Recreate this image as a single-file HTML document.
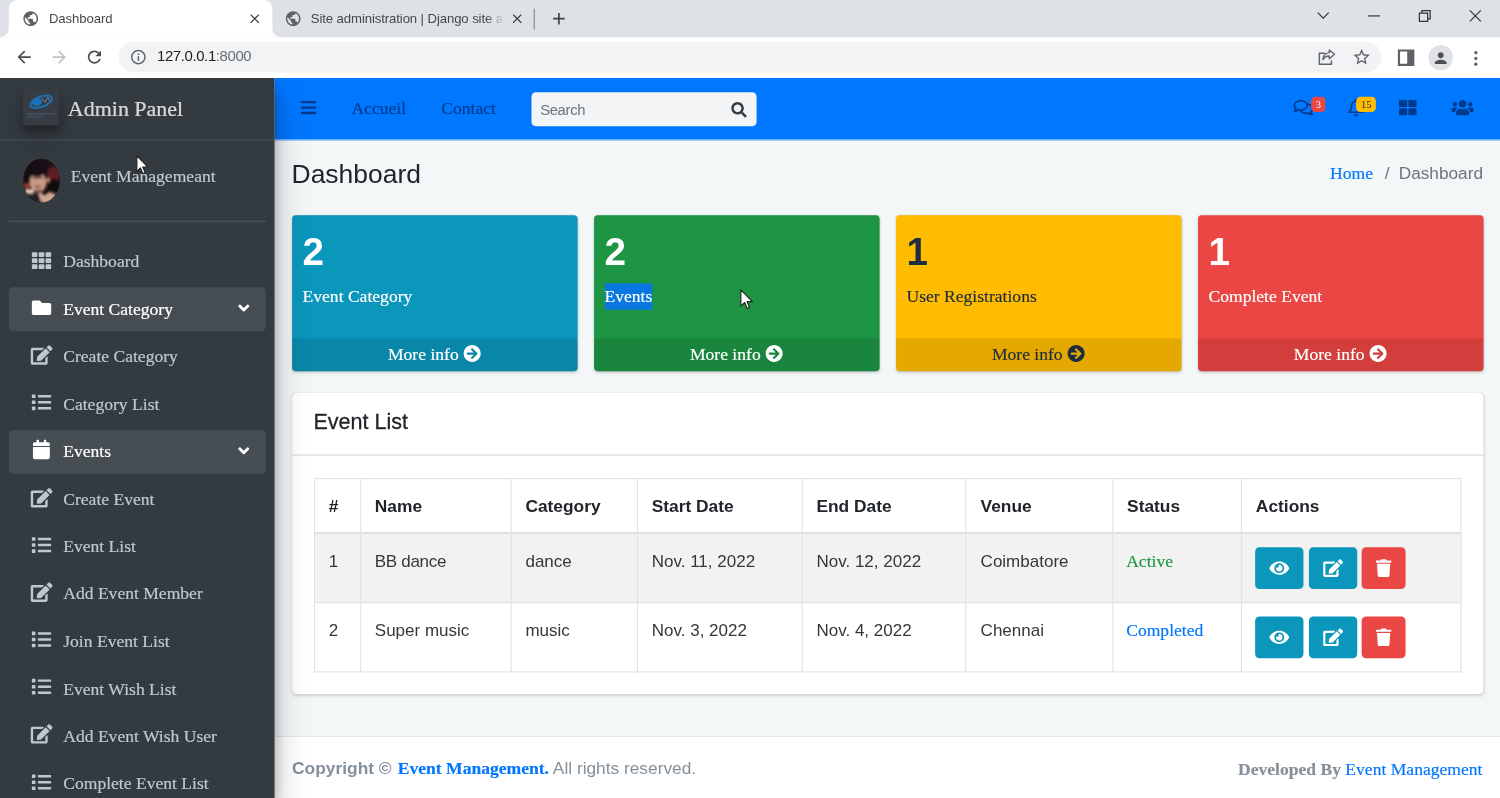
<!DOCTYPE html>
<html lang="en">
<head>
<meta charset="utf-8">
<title>Dashboard</title>
<style>
html,body{margin:0;padding:0;width:1500px;height:798px;overflow:hidden;background:#ffffff}
*{box-sizing:border-box}
#w{position:absolute;left:0;top:0;width:1366px;height:727px;transform:scale(1.098097);transform-origin:0 0;overflow:hidden;font-family:"Liberation Sans",sans-serif;font-size:16px;line-height:1.5;color:#212529;background:#f4f6f9}
svg{display:inline-block;overflow:visible}
p{margin:0}
a{text-decoration:none;color:inherit}
.serif{font-family:"Liberation Serif",serif}
.abs{position:absolute}

/* ---------- browser chrome ---------- */
#tabs{position:absolute;left:0;top:0;width:1366px;height:34px;background:#dee1e6}
#tab1{position:absolute;left:8px;top:0;width:240px;height:34px;background:#ffffff;border-radius:8px 8px 0 0}
#tab1:before,#tab1:after{content:"";position:absolute;bottom:0;width:8px;height:8px}
#tab1:before{left:-8px;background:radial-gradient(circle at 0 0,rgba(255,255,255,0) 7.6px,#ffffff 8.2px)}
#tab1:after{right:-8px;background:radial-gradient(circle at 100% 0,rgba(255,255,255,0) 7.6px,#ffffff 8.2px)}
.ttl{position:absolute;top:9px;font-size:12px;line-height:16px;color:#45494d;white-space:nowrap;letter-spacing:-.1px}
.ci{position:absolute;line-height:0}
#toolbar{position:absolute;left:0;top:34px;width:1366px;height:37px;background:#ffffff}
#omni{position:absolute;left:108.4px;top:4.3px;width:1149.2px;height:28px;border-radius:14px;background:#f1f3f4}
#url{position:absolute;left:34.6px;top:5px;font-size:13.6px;line-height:18px;color:#202124;white-space:nowrap;letter-spacing:-.35px}
#url span{color:#6a6e73}

/* ---------- sidebar ---------- */
#page{position:absolute;left:0;top:71px;width:1366px;height:656px;overflow:hidden;background:rgb(244,247,248)}
#side{position:absolute;left:0;top:0;width:250px;height:656px;background:#333a40;z-index:5;box-shadow:0 14px 28px rgba(0,0,0,.25),0 10px 10px rgba(0,0,0,.22);font-family:"Liberation Serif",serif;color:#c1c7d0;-webkit-text-stroke:.18px}
#brand{height:57px;border-bottom:1px solid #4a545c;padding:13px 8px;font-size:20px;line-height:30px;color:rgba(255,255,255,.8);white-space:nowrap}
#logo{float:left;margin-left:12.8px;margin-right:8px;margin-top:-3px;width:33px;height:33px;box-shadow:0 10px 20px rgba(0,0,0,.19),0 6px 6px rgba(0,0,0,.23);line-height:0}
#sb{padding:0 8px}
#user{margin-top:16px;padding-bottom:16px;margin-bottom:16px;border-bottom:1px solid #4e5963;display:flex;height:58px}
#user .image{padding-left:12.8px;line-height:0}
#user .info{padding:5px 5px 5px 10px;line-height:24px;white-space:nowrap}
.nl{display:block;position:relative;height:40px;padding:8px 16px;margin-bottom:3.2px;border-radius:4px;white-space:nowrap;color:#c1c7d0}
.nl.act{background:rgba(255,255,255,.1);color:#ffffff}
.nl .r{position:absolute;right:15px;top:11.2px;line-height:0}

/* ---------- navbar ---------- */
#nav{position:absolute;left:250px;top:0;width:1116px;height:57px;background:#0077ff;border-bottom:1px solid #cde2f8;color:rgb(0,58,138)}
#nav .it{position:absolute;top:16px;line-height:24px;white-space:nowrap;font-family:"Liberation Serif",serif}
#nav .ic{position:absolute;line-height:0}
#search{position:absolute;left:233.6px;top:12.5px;width:205.4px;height:31px;border-radius:4px;background:#f2f4f6}
#search span{position:absolute;left:8.3px;top:6px;font-size:13.5px;line-height:21px;color:#6b757d;letter-spacing:-.3px}
#search .ic{right:8.6px;top:9.6px}
.bdg{position:absolute;top:17px;height:13.6px;font-size:9.6px;line-height:13.6px;padding:0 4px;border-radius:4px;font-family:"Liberation Serif",serif;text-align:center}

/* ---------- content ---------- */
#main{position:absolute;left:250px;top:57px;width:1116px;height:599px}
#h1{position:absolute;left:15.5px;top:17px;font-size:24.1px;line-height:28.8px;color:#212529;white-space:nowrap}
#bc{position:absolute;right:15.5px;top:17.7px;line-height:24px;white-space:nowrap;color:#6b757d;font-size:15.7px}
#bc a{font-family:"Liberation Serif",serif;color:#0077ff;font-size:16px}
#bc i{font-style:normal;padding:0 8.4px 0 10.7px}
.sbx{position:absolute;top:67.8px;width:260px;height:142.2px;border-radius:3.5px;box-shadow:0 0 1px rgba(0,0,0,.1),0 1px 3px rgba(0,0,0,.14);color:#ffffff;overflow:hidden}
.sbx h3{margin:0;position:absolute;left:10px;top:12.4px;font-size:35.2px;line-height:42.24px;font-weight:bold;white-space:nowrap}
.sbx p{position:absolute;left:10px;top:62.24px;line-height:24px;font-family:"Liberation Serif",serif;white-space:nowrap}
.sbx .ft{position:absolute;left:0;right:0;bottom:0;height:30px;padding:3px 0;background:rgba(0,0,0,.1);text-align:center;line-height:24px;font-family:"Liberation Serif",serif;color:#ffffff;white-space:nowrap}
.sbx .ft svg{vertical-align:-2px}
.sel{background:rgb(8,120,224);color:#ffffff;display:inline-block;line-height:24px;height:24px;vertical-align:top}
#card{position:absolute;left:15.5px;top:230px;width:1085px;height:274px;background:#ffffff;border-radius:4px;box-shadow:0 0 1px rgba(0,0,0,.1),0 1px 3px rgba(0,0,0,.15)}
#ch{height:57px;border-bottom:1px solid rgba(0,0,0,.125);padding:12px 20px}
#ch span{display:block;font-size:19.6px;line-height:24px;white-space:nowrap;position:relative;top:1.8px;-webkit-text-stroke:.25px #212529}
table{position:absolute;left:20px;top:77px;transform:translateY(.4px);width:1045px;border-collapse:collapse;table-layout:fixed}
th,td{border:1px solid #dee2e6;padding:12px;text-align:left;vertical-align:top;font-size:15.5px;line-height:24px;white-space:nowrap}
th{font-weight:bold;border-bottom-width:2px;font-size:15.8px}
th span,td span.t{position:relative;top:1px;left:.8px}
td span.t{color:#34383c}
tr.odd td{background:rgba(0,0,0,.05)}
td .st{font-family:"Liberation Serif",serif;font-size:16px;position:relative;top:1.3px}
.btn{display:inline-block;height:38px;border-radius:4px;vertical-align:top;text-align:center;line-height:0;padding-top:11px;color:#ffffff}
.bi{background:#0b96bb;width:44px}
.bd{background:#ea4643;width:40px}
#foot{position:absolute;left:0;bottom:0;width:1116px;height:57px;background:#ffffff;border-top:1px solid #dee2e6;padding:16px;color:#85909a;line-height:24px;white-space:nowrap}
#foot .l{position:absolute;left:16px;top:17px;font-size:15.75px}
#foot .l>b{font-size:15.8px;margin-right:1.2px}
#foot .rr{position:absolute;right:16px;top:17.9px;font-family:"Liberation Serif",serif}
#foot a{color:#0077ff;font-family:"Liberation Serif",serif;font-size:16px}
.cur{position:absolute;z-index:50;line-height:0}
svg.fa{vertical-align:-2px}

#navl{transform:translateY(.55px)}
.sbx p,.sbx .ft,#nav .it,td .st,#bc a,#foot a,#foot .rr{-webkit-text-stroke:.15px}

</style>
</head>
<body>
<div id="w">

<!-- ======== browser chrome ======== -->
<div id="tabs">
  <div id="tab1">
    <span class="ci" style="left:12px;top:9px"><svg viewBox="0 0 24 24" width="16.0" height="16.0" style="" aria-hidden="true"><path fill="#5f6368" d="M12 2C6.48 2 2 6.48 2 12s4.48 10 10 10 10-4.48 10-10S17.52 2 12 2zm-1 17.93c-3.95-.49-7-3.85-7-7.93 0-.62.08-1.21.21-1.79L9 15v1c0 1.1.9 2 2 2v1.930zm6.900-2.540c-.260-.810-1-1.390-1.900-1.390h-1v-3c0-.550-.450-1-1-1H8v-2h2c.550 0 1-.450 1-1V7h2c1.100 0 2-.900 2-2v-.410c2.930 1.190 5 4.060 5 7.410 0 2.080-.800 3.970-2.100 5.390z"/></svg></span>
    <span class="ttl" style="left:36.6px">Dashboard</span>
    <span class="ci" style="left:217px;top:10px"><svg viewBox="0 0 24 24" width="14.0" height="14.0" style="" aria-hidden="true"><path fill="#3c4043" d="M19 6.410L17.590 5 12 10.590 6.410 5 5 6.410 10.590 12 5 17.590 6.410 19 12 13.410 17.590 19 19 17.590 13.410 12z"/></svg></span>
  </div>
  <span class="ci" style="left:258.5px;top:9px"><svg viewBox="0 0 24 24" width="16.0" height="16.0" style="" aria-hidden="true"><path fill="#5f6368" d="M12 2C6.48 2 2 6.48 2 12s4.48 10 10 10 10-4.48 10-10S17.52 2 12 2zm-1 17.93c-3.95-.49-7-3.85-7-7.93 0-.62.08-1.21.21-1.79L9 15v1c0 1.1.9 2 2 2v1.930zm6.900-2.540c-.260-.810-1-1.390-1.900-1.390h-1v-3c0-.550-.450-1-1-1H8v-2h2c.550 0 1-.450 1-1V7h2c1.100 0 2-.900 2-2v-.410c2.930 1.190 5 4.060 5 7.410 0 2.080-.800 3.970-2.100 5.390z"/></svg></span>
  <span class="ttl" style="left:283px;width:178px;overflow:hidden;-webkit-mask-image:linear-gradient(90deg,#000000 160px,transparent 176px);mask-image:linear-gradient(90deg,#000000 160px,transparent 176px)">Site administration | Django site admin</span>
  <span class="ci" style="left:464px;top:10px"><svg viewBox="0 0 24 24" width="14.0" height="14.0" style="" aria-hidden="true"><path fill="#3c4043" d="M19 6.410L17.590 5 12 10.590 6.410 5 5 6.410 10.590 12 5 17.590 6.410 19 12 13.410 17.590 19 19 17.590 13.410 12z"/></svg></span>
  <span class="abs" style="left:486px;top:8px;width:1px;height:19px;background:#7f868b"></span>
  <span class="ci" style="left:499.5px;top:8px"><svg viewBox="0 0 24 24" width="18.0" height="18.0" style="" aria-hidden="true"><path fill="#3c4043" d="M19 13h-6v6h-2v-6H5v-2h6V5h2v6h6v2z"/></svg></span>
  <span class="ci" style="left:1199px;top:9px"><svg width="12" height="10" viewBox="0 0 12 10"><path d="M1 2.5l5 5 5-5" fill="none" stroke="#333333" stroke-width="1.1"/></svg></span>
  <span class="ci" style="left:1245.5px;top:9px"><svg width="11" height="10" viewBox="0 0 11 10"><path d="M0 5.5h10.5" fill="none" stroke="#333333" stroke-width="1.1"/></svg></span>
  <span class="ci" style="left:1291.5px;top:9px"><svg width="11" height="11" viewBox="0 0 11 11"><path d="M.6 2.9h7.5v7.5H.6z M2.9 2.9V.6h7.5v7.5H8.1" fill="none" stroke="#333333" stroke-width="1.1"/></svg></span>
  <span class="ci" style="left:1338px;top:9px"><svg width="11" height="11" viewBox="0 0 11 11"><path d="M.5.5l10 10M10.500.5l-10 10" fill="none" stroke="#333333" stroke-width="1.1"/></svg></span>
</div>
<div id="toolbar">
  <span class="ci" style="left:12.9px;top:9px"><svg viewBox="0 0 24 24" width="18.0" height="18.0" style="" aria-hidden="true"><path fill="#4a4d51" d="M20 11H7.83l5.590-5.590L12 4l-8 8 8 8 1.410-1.410L7.830 13H20v-2z"/></svg></span>
  <span class="ci" style="left:45.2px;top:9px"><svg viewBox="0 0 24 24" width="18.0" height="18.0" style="" aria-hidden="true"><path fill="#bdc1c6" d="M12 4l-1.410 1.410L16.170 11H4v2h12.170l-5.580 5.590L12 20l8-8z"/></svg></span>
  <span class="ci" style="left:77px;top:9px"><svg viewBox="0 0 24 24" width="18.0" height="18.0" style="" aria-hidden="true"><path fill="#4a4d51" d="M17.650 6.350C16.200 4.900 14.210 4 12 4c-4.420 0-7.990 3.580-7.990 8s3.570 8 7.990 8c3.730 0 6.840-2.550 7.730-6h-2.080c-.820 2.330-3.040 4-5.650 4-3.310 0-6-2.690-6-6s2.690-6 6-6c1.660 0 3.140.690 4.220 1.780L13 11h7V4l-2.350 2.350z"/></svg></span>
  <div id="omni">
    <span class="ci" style="left:10px;top:6px"><svg viewBox="0 0 24 24" width="16.0" height="16.0" style="" aria-hidden="true"><path fill="#5f6368" d="M11 7h2v2h-2zm0 4h2v6h-2zm1-9C6.480 2 2 6.480 2 12s4.480 10 10 10 10-4.480 10-10S17.520 2 12 2zm0 18c-4.410 0-8-3.590-8-8s3.590-8 8-8 8 3.590 8 8-3.590 8-8 8z"/></svg></span>
    <span id="url">127.0.0.1<span>:8000</span></span>
  </div>
  <span class="ci" style="left:1200px;top:10px"><svg width="17" height="16" viewBox="0 0 17 16"><path d="M6.500 4.500H1.500V14.500H12.500V11" fill="none" stroke="#5f6368" stroke-width="1.300"/><path d="M10.500 1.500L15.300 5.500L10.500 9.500V7C7.500 7 5.800 8.200 4.800 10.500C5 7 6.800 4.300 10.500 4Z" fill="none" stroke="#5f6368" stroke-width="1.200" stroke-linejoin="round"/></svg></span>
  <span class="ci" style="left:1230.5px;top:9px"><svg viewBox="0 0 24 24" width="18.0" height="18.0" style="" aria-hidden="true"><path fill="#5f6368" d="M22 9.240l-7.190-.620L12 2 9.190 8.630 2 9.240l5.460 4.730L5.820 21 12 17.270 18.180 21l-1.630-7.030L22 9.240zM12 15.400l-3.760 2.270 1-4.280-3.320-2.880 4.380-.380L12 6.100l1.710 4.040 4.380.380-3.320 2.880 1 4.280L12 15.400z"/></svg></span>
  <span class="ci" style="left:1273px;top:11px"><svg width="15" height="15" viewBox="0 0 15 15"><path d="M1 1h13v13H1z" fill="none" stroke="#5f6368" stroke-width="2"/><path d="M8.500 1h5.500v13H8.500z" fill="#5f6368"/></svg></span>
  <span class="abs" style="left:1300.500px;top:7.300px;width:22.500px;height:22.500px;border-radius:50%;background:#dfe1e5"></span>
  <span class="ci" style="left:1303.800px;top:10.500px"><svg viewBox="0 0 24 24" width="16.0" height="16.0" style="" aria-hidden="true"><path fill="#494f55" d="M12 12c2.210 0 4-1.790 4-4s-1.790-4-4-4-4 1.790-4 4 1.790 4 4 4zm0 2c-2.670 0-8 1.340-8 4v2h16v-2c0-2.660-5.330-4-8-4z"/></svg></span>
  <span class="ci" style="left:1342.200px;top:11.500px"><svg width="4" height="15" viewBox="0 0 4 15"><circle cx="2" cy="2" r="1.500" fill="#5f6368"/><circle cx="2" cy="7.200" r="1.500" fill="#5f6368"/><circle cx="2" cy="12.400" r="1.500" fill="#5f6368"/></svg></span>
</div>

<div id="page">
<!-- ======== sidebar ======== -->
<div id="side">
  <div id="brand">
    <span id="logo"><svg width="33" height="33" viewBox="0 0 33 33"><defs><filter id="blg" x="-20%" y="-20%" width="140%" height="140%"><feGaussianBlur stdDeviation=".7"/></filter></defs><rect width="33" height="33" fill="rgb(54,60,66)"/><g filter="url(#blg)"><ellipse cx="16.500" cy="11.700" rx="10.300" ry="4.600" fill="none" stroke="rgb(28,108,170)" stroke-width="2" transform="rotate(-20 16.500 11.700)"/><ellipse cx="12.500" cy="11.800" rx="4.800" ry="3.700" fill="rgb(26,112,180)"/><path d="M17 8.500l3 3.500 2.500-4.500 1.500 3" stroke="rgb(100,140,170)" stroke-width=".9" fill="none"/><rect x="3.500" y="22.200" width="26" height="1.200" fill="rgb(66,86,106)"/><rect x="3.500" y="25" width="15" height="1.100" fill="rgb(62,80,98)"/></g></svg></span><span>Admin Panel</span>
  </div>
  <div id="sb">
    <div id="user">
      <div class="image"><svg width="33.600" height="41" viewBox="0 0 34 41"><defs><clipPath id="av"><ellipse cx="17" cy="20.500" rx="16.800" ry="20.300"/></clipPath><filter id="bl" x="-20%" y="-20%" width="140%" height="140%"><feGaussianBlur stdDeviation="1.100"/></filter></defs><g clip-path="url(#av)"><rect width="34" height="41" fill="rgb(30,16,20)"/><g filter="url(#bl)"><ellipse cx="28" cy="15" rx="6" ry="8" fill="rgb(92,30,36)"/><ellipse cx="28.500" cy="25" rx="5" ry="6" fill="rgb(14,8,10)"/><ellipse cx="3.500" cy="24.500" rx="2.600" ry="3.500" fill="rgb(170,62,44)"/><ellipse cx="13.800" cy="22" rx="7.800" ry="9.600" fill="rgb(200,154,132)"/><ellipse cx="23" cy="20" rx="1.500" ry="2.500" fill="rgb(190,140,120)"/><ellipse cx="12" cy="9.800" rx="10.500" ry="6.800" fill="rgb(22,16,18)"/><ellipse cx="3.500" cy="16" rx="3" ry="8" fill="rgb(20,14,16)"/><ellipse cx="9" cy="38" rx="7" ry="5" fill="rgb(34,34,38)"/><ellipse cx="30" cy="38" rx="6" ry="5" fill="rgb(40,40,46)"/><path d="M13 30L17 41H27L30 33L24 31L20 34Z" fill="rgb(204,164,144)"/><ellipse cx="6" cy="30.500" rx="5.200" ry="2.200" fill="rgb(226,196,180)"/><ellipse cx="13.500" cy="17.500" rx="5.500" ry="1.300" fill="rgb(110,76,66)"/><ellipse cx="13.500" cy="26" rx="3.200" ry="1.200" fill="rgb(150,96,86)"/><ellipse cx="14" cy="30.500" rx="5" ry="1.800" fill="rgb(120,84,72)"/></g></g></svg></div>
      <div class="info">Event Managemeant</div>
    </div>
    <div id="navl">
    <a class="nl"><svg class="fa " viewBox="0 0 512 512" width="17.600" height="17.6" style="margin-left:4.80px;margin-right:7.20px;vertical-align:-2.2px" aria-hidden="true"><path fill="currentColor" d="M149.333 56v80c0 13.255-10.745 24-24 24H24c-13.255 0-24-10.745-24-24V56c0-13.255 10.745-24 24-24h101.333c13.255 0 24 10.745 24 24zm181.334 240v-80c0-13.255-10.745-24-24-24H205.333c-13.255 0-24 10.745-24 24v80c0 13.255 10.745 24 24 24h101.333c13.256 0 24.001-10.745 24.001-24zm32-240v80c0 13.255 10.745 24 24 24H488c13.255 0 24-10.745 24-24V56c0-13.255-10.745-24-24-24H386.667c-13.255 0-24 10.745-24 24zm-32 80V56c0-13.255-10.745-24-24-24H205.333c-13.255 0-24 10.745-24 24v80c0 13.255 10.745 24 24 24h101.333c13.256 0 24.001-10.745 24.001-24zm-205.334 56H24c-13.255 0-24 10.745-24 24v80c0 13.255 10.745 24 24 24h101.333c13.255 0 24-10.745 24-24v-80c0-13.255-10.745-24-24-24zM0 376v80c0 13.255 10.745 24 24 24h101.333c13.255 0 24-10.745 24-24v-80c0-13.255-10.745-24-24-24H24c-13.255 0-24 10.745-24 24zm386.667-56H488c13.255 0 24-10.745 24-24v-80c0-13.255-10.745-24-24-24H386.667c-13.255 0-24 10.745-24 24v80c0 13.255 10.745 24 24 24zm0 160H488c13.255 0 24-10.745 24-24v-80c0-13.255-10.745-24-24-24H386.667c-13.255 0-24 10.745-24 24v80c0 13.255 10.745 24 24 24zM181.333 376v80c0 13.255 10.745 24 24 24h101.333c13.255 0 24-10.745 24-24v-80c0-13.255-10.745-24-24-24H205.333c-13.255 0-24 10.745-24 24z"/></svg> <p style="display:inline">Dashboard</p></a>
    <a class="nl act"><svg class="fa " viewBox="0 0 512 512" width="17.600" height="17.6" style="margin-left:4.80px;margin-right:7.20px;vertical-align:-2.2px" aria-hidden="true"><path fill="currentColor" d="M464 128H272l-64-64H48C21.49 64 0 85.49 0 112v288c0 26.51 21.49 48 48 48h416c26.51 0 48-21.49 48-48V176c0-26.51-21.49-48-48-48z"/></svg> <p style="display:inline">Event Category</p><span class="r"><svg class="fa " viewBox="0 0 320 512" width="10.000" height="16.0" style="" aria-hidden="true"><path fill="currentColor" d="M143 352.3L7 216.3c-9.400-9.400-9.400-24.600 0-33.900l22.600-22.600c9.400-9.400 24.600-9.400 33.900 0l96.400 96.400 96.400-96.400c9.400-9.400 24.600-9.400 33.900 0l22.600 22.600c9.400 9.400 9.400 24.600 0 33.900l-136 136c-9.200 9.400-24.400 9.400-33.800 0z"/></svg></span></a>
    <a class="nl"><svg class="fa " viewBox="0 0 576 512" width="19.800" height="17.6" style="margin-left:3.70px;margin-right:6.10px;vertical-align:-2.2px" aria-hidden="true"><path fill="currentColor" d="M402.6 83.2l90.2 90.2c3.8 3.8 3.8 10 0 13.8L274.4 405.6l-92.8 10.3c-12.4 1.4-22.9-9.1-21.5-21.5l10.3-92.8L388.8 83.2c3.8-3.8 10-3.8 13.8 0zm162-22.9l-48.800-48.800c-15.200-15.200-39.900-15.200-55.200 0l-35.400 35.400c-3.800 3.800-3.800 10 0 13.800l90.200 90.200c3.800 3.800 10 3.800 13.800 0l35.400-35.400c15.200-15.300 15.200-40 0-55.200zM384 346.200V448H64V128h229.800c3.200 0 6.200-1.300 8.500-3.500l40-40c7.600-7.600 2.200-20.500-8.500-20.500H48C21.500 64 0 85.500 0 112v352c0 26.500 21.500 48 48 48h352c26.500 0 48-21.500 48-48V306.200c0-10.700-12.900-16-20.500-8.500l-40 40c-2.200 2.300-3.500 5.300-3.500 8.500z"/></svg> <p style="display:inline">Create Category</p></a>
    <a class="nl"><svg class="fa " viewBox="0 0 512 512" width="17.600" height="17.6" style="margin-left:4.80px;margin-right:7.20px;vertical-align:-2.2px" aria-hidden="true"><path fill="currentColor" d="M80 368H16a16 16 0 0 0-16 16v64a16 16 0 0 0 16 16h64a16 16 0 0 0 16-16v-64a16 16 0 0 0-16-16zm0-320H16A16 16 0 0 0 0 64v64a16 16 0 0 0 16 16h64a16 16 0 0 0 16-16V64a16 16 0 0 0-16-16zm0 160H16a16 16 0 0 0-16 16v64a16 16 0 0 0 16 16h64a16 16 0 0 0 16-16v-64a16 16 0 0 0-16-16zm416 176H176a16 16 0 0 0-16 16v32a16 16 0 0 0 16 16h320a16 16 0 0 0 16-16v-32a16 16 0 0 0-16-16zm0-320H176a16 16 0 0 0-16 16v32a16 16 0 0 0 16 16h320a16 16 0 0 0 16-16V80a16 16 0 0 0-16-16zm0 160H176a16 16 0 0 0-16 16v32a16 16 0 0 0 16 16h320a16 16 0 0 0 16-16v-32a16 16 0 0 0-16-16z"/></svg> <p style="display:inline">Category List</p></a>
    <a class="nl act"><svg class="fa " viewBox="0 0 448 512" width="15.400" height="17.6" style="margin-left:5.90px;margin-right:8.30px;vertical-align:-2.2px" aria-hidden="true"><path fill="currentColor" d="M12 192h424c6.600 0 12 5.400 12 12v260c0 26.500-21.500 48-48 48H48c-26.500 0-48-21.500-48-48V204c0-6.600 5.400-12 12-12zm436-44v-36c0-26.500-21.500-48-48-48h-48V12c0-6.600-5.400-12-12-12h-40c-6.600 0-12 5.400-12 12v52H160V12c0-6.600-5.400-12-12-12h-40c-6.600 0-12 5.400-12 12v52H48C21.500 64 0 85.500 0 112v36c0 6.600 5.400 12 12 12h424c6.600 0 12-5.400 12-12z"/></svg> <p style="display:inline">Events</p><span class="r"><svg class="fa " viewBox="0 0 320 512" width="10.000" height="16.0" style="" aria-hidden="true"><path fill="currentColor" d="M143 352.3L7 216.3c-9.400-9.400-9.400-24.600 0-33.900l22.600-22.600c9.400-9.400 24.600-9.400 33.900 0l96.400 96.400 96.400-96.400c9.400-9.400 24.600-9.400 33.900 0l22.600 22.600c9.400 9.400 9.400 24.600 0 33.900l-136 136c-9.200 9.400-24.400 9.400-33.800 0z"/></svg></span></a>
    <a class="nl"><svg class="fa " viewBox="0 0 576 512" width="19.800" height="17.6" style="margin-left:3.70px;margin-right:6.10px;vertical-align:-2.2px" aria-hidden="true"><path fill="currentColor" d="M402.6 83.2l90.2 90.2c3.8 3.8 3.8 10 0 13.8L274.4 405.6l-92.8 10.3c-12.4 1.4-22.9-9.1-21.5-21.5l10.3-92.8L388.8 83.2c3.8-3.8 10-3.8 13.8 0zm162-22.9l-48.800-48.800c-15.200-15.200-39.900-15.200-55.200 0l-35.400 35.400c-3.800 3.800-3.800 10 0 13.800l90.200 90.200c3.800 3.800 10 3.800 13.800 0l35.400-35.400c15.200-15.300 15.200-40 0-55.200zM384 346.200V448H64V128h229.800c3.200 0 6.200-1.300 8.500-3.500l40-40c7.600-7.600 2.200-20.500-8.500-20.500H48C21.500 64 0 85.500 0 112v352c0 26.500 21.500 48 48 48h352c26.500 0 48-21.500 48-48V306.200c0-10.700-12.900-16-20.500-8.500l-40 40c-2.200 2.300-3.500 5.300-3.500 8.500z"/></svg> <p style="display:inline">Create Event</p></a>
    <a class="nl"><svg class="fa " viewBox="0 0 512 512" width="17.600" height="17.6" style="margin-left:4.80px;margin-right:7.20px;vertical-align:-2.2px" aria-hidden="true"><path fill="currentColor" d="M80 368H16a16 16 0 0 0-16 16v64a16 16 0 0 0 16 16h64a16 16 0 0 0 16-16v-64a16 16 0 0 0-16-16zm0-320H16A16 16 0 0 0 0 64v64a16 16 0 0 0 16 16h64a16 16 0 0 0 16-16V64a16 16 0 0 0-16-16zm0 160H16a16 16 0 0 0-16 16v64a16 16 0 0 0 16 16h64a16 16 0 0 0 16-16v-64a16 16 0 0 0-16-16zm416 176H176a16 16 0 0 0-16 16v32a16 16 0 0 0 16 16h320a16 16 0 0 0 16-16v-32a16 16 0 0 0-16-16zm0-320H176a16 16 0 0 0-16 16v32a16 16 0 0 0 16 16h320a16 16 0 0 0 16-16V80a16 16 0 0 0-16-16zm0 160H176a16 16 0 0 0-16 16v32a16 16 0 0 0 16 16h320a16 16 0 0 0 16-16v-32a16 16 0 0 0-16-16z"/></svg> <p style="display:inline">Event List</p></a>
    <a class="nl"><svg class="fa " viewBox="0 0 576 512" width="19.800" height="17.6" style="margin-left:3.70px;margin-right:6.10px;vertical-align:-2.2px" aria-hidden="true"><path fill="currentColor" d="M402.6 83.2l90.2 90.2c3.8 3.8 3.8 10 0 13.8L274.4 405.6l-92.8 10.3c-12.4 1.4-22.9-9.1-21.5-21.5l10.3-92.8L388.8 83.2c3.8-3.8 10-3.8 13.8 0zm162-22.9l-48.800-48.800c-15.200-15.200-39.900-15.200-55.200 0l-35.400 35.400c-3.800 3.800-3.800 10 0 13.800l90.200 90.200c3.800 3.800 10 3.800 13.800 0l35.400-35.400c15.200-15.300 15.200-40 0-55.200zM384 346.200V448H64V128h229.800c3.200 0 6.200-1.300 8.500-3.500l40-40c7.600-7.600 2.200-20.500-8.500-20.500H48C21.500 64 0 85.500 0 112v352c0 26.500 21.500 48 48 48h352c26.500 0 48-21.500 48-48V306.200c0-10.700-12.900-16-20.500-8.500l-40 40c-2.200 2.300-3.500 5.300-3.500 8.500z"/></svg> <p style="display:inline">Add Event Member</p></a>
    <a class="nl"><svg class="fa " viewBox="0 0 512 512" width="17.600" height="17.6" style="margin-left:4.80px;margin-right:7.20px;vertical-align:-2.2px" aria-hidden="true"><path fill="currentColor" d="M80 368H16a16 16 0 0 0-16 16v64a16 16 0 0 0 16 16h64a16 16 0 0 0 16-16v-64a16 16 0 0 0-16-16zm0-320H16A16 16 0 0 0 0 64v64a16 16 0 0 0 16 16h64a16 16 0 0 0 16-16V64a16 16 0 0 0-16-16zm0 160H16a16 16 0 0 0-16 16v64a16 16 0 0 0 16 16h64a16 16 0 0 0 16-16v-64a16 16 0 0 0-16-16zm416 176H176a16 16 0 0 0-16 16v32a16 16 0 0 0 16 16h320a16 16 0 0 0 16-16v-32a16 16 0 0 0-16-16zm0-320H176a16 16 0 0 0-16 16v32a16 16 0 0 0 16 16h320a16 16 0 0 0 16-16V80a16 16 0 0 0-16-16zm0 160H176a16 16 0 0 0-16 16v32a16 16 0 0 0 16 16h320a16 16 0 0 0 16-16v-32a16 16 0 0 0-16-16z"/></svg> <p style="display:inline">Join Event List</p></a>
    <a class="nl"><svg class="fa " viewBox="0 0 512 512" width="17.600" height="17.6" style="margin-left:4.80px;margin-right:7.20px;vertical-align:-2.2px" aria-hidden="true"><path fill="currentColor" d="M80 368H16a16 16 0 0 0-16 16v64a16 16 0 0 0 16 16h64a16 16 0 0 0 16-16v-64a16 16 0 0 0-16-16zm0-320H16A16 16 0 0 0 0 64v64a16 16 0 0 0 16 16h64a16 16 0 0 0 16-16V64a16 16 0 0 0-16-16zm0 160H16a16 16 0 0 0-16 16v64a16 16 0 0 0 16 16h64a16 16 0 0 0 16-16v-64a16 16 0 0 0-16-16zm416 176H176a16 16 0 0 0-16 16v32a16 16 0 0 0 16 16h320a16 16 0 0 0 16-16v-32a16 16 0 0 0-16-16zm0-320H176a16 16 0 0 0-16 16v32a16 16 0 0 0 16 16h320a16 16 0 0 0 16-16V80a16 16 0 0 0-16-16zm0 160H176a16 16 0 0 0-16 16v32a16 16 0 0 0 16 16h320a16 16 0 0 0 16-16v-32a16 16 0 0 0-16-16z"/></svg> <p style="display:inline">Event Wish List</p></a>
    <a class="nl"><svg class="fa " viewBox="0 0 576 512" width="19.800" height="17.6" style="margin-left:3.70px;margin-right:6.10px;vertical-align:-2.2px" aria-hidden="true"><path fill="currentColor" d="M402.6 83.2l90.2 90.2c3.8 3.8 3.8 10 0 13.8L274.4 405.6l-92.8 10.3c-12.4 1.4-22.9-9.1-21.5-21.5l10.3-92.8L388.8 83.2c3.8-3.8 10-3.8 13.8 0zm162-22.9l-48.800-48.800c-15.200-15.200-39.900-15.200-55.200 0l-35.400 35.400c-3.800 3.800-3.800 10 0 13.800l90.200 90.200c3.800 3.800 10 3.800 13.800 0l35.400-35.400c15.200-15.300 15.200-40 0-55.200zM384 346.200V448H64V128h229.800c3.200 0 6.200-1.300 8.500-3.500l40-40c7.600-7.600 2.200-20.500-8.500-20.500H48C21.500 64 0 85.500 0 112v352c0 26.500 21.500 48 48 48h352c26.500 0 48-21.500 48-48V306.200c0-10.700-12.900-16-20.500-8.500l-40 40c-2.200 2.300-3.500 5.300-3.500 8.500z"/></svg> <p style="display:inline">Add Event Wish User</p></a>
    <a class="nl"><svg class="fa " viewBox="0 0 512 512" width="17.600" height="17.6" style="margin-left:4.80px;margin-right:7.20px;vertical-align:-2.2px" aria-hidden="true"><path fill="currentColor" d="M80 368H16a16 16 0 0 0-16 16v64a16 16 0 0 0 16 16h64a16 16 0 0 0 16-16v-64a16 16 0 0 0-16-16zm0-320H16A16 16 0 0 0 0 64v64a16 16 0 0 0 16 16h64a16 16 0 0 0 16-16V64a16 16 0 0 0-16-16zm0 160H16a16 16 0 0 0-16 16v64a16 16 0 0 0 16 16h64a16 16 0 0 0 16-16v-64a16 16 0 0 0-16-16zm416 176H176a16 16 0 0 0-16 16v32a16 16 0 0 0 16 16h320a16 16 0 0 0 16-16v-32a16 16 0 0 0-16-16zm0-320H176a16 16 0 0 0-16 16v32a16 16 0 0 0 16 16h320a16 16 0 0 0 16-16V80a16 16 0 0 0-16-16zm0 160H176a16 16 0 0 0-16 16v32a16 16 0 0 0 16 16h320a16 16 0 0 0 16-16v-32a16 16 0 0 0-16-16z"/></svg> <p style="display:inline">Complete Event List</p></a>
    </div>
  </div>
</div>

<!-- ======== navbar ======== -->
<div id="nav">
  <span class="ic" style="left:24px;top:19.2px"><svg class="fa " viewBox="0 0 448 512" width="14.000" height="16.0" style="" aria-hidden="true"><path fill="currentColor" d="M16 132h416c8.837 0 16-7.163 16-16V76c0-8.837-7.163-16-16-16H16C7.163 60 0 67.163 0 76v40c0 8.837 7.163 16 16 16zm0 160h416c8.837 0 16-7.163 16-16v-40c0-8.837-7.163-16-16-16H16c-8.837 0-16 7.163-16 16v40c0 8.837 7.163 16 16 16zm0 160h416c8.837 0 16-7.163 16-16v-40c0-8.837-7.163-16-16-16H16c-8.837 0-16 7.163-16 16v40c0 8.837 7.163 16 16 16z"/></svg></span>
  <a class="it" style="left:70px">Accueil</a>
  <a class="it" style="left:151.800px">Contact</a>
  <div id="search"><span>Search</span><i class="ic" style="color:#333a40"><svg class="fa " viewBox="0 0 512 512" width="14.000" height="14.0" style="" aria-hidden="true"><path fill="currentColor" d="M505 442.7L405.3 343c-4.500-4.500-10.600-7-17-7H372c27.600-35.300 44-79.700 44-128C416 93.100 322.900 0 208 0S0 93.100 0 208s93.100 208 208 208c48.300 0 92.700-16.400 128-44v16.300c0 6.400 2.500 12.500 7 17l99.700 99.700c9.400 9.400 24.600 9.400 33.900 0l28.300-28.300c9.400-9.400 9.400-24.600.1-34zM208 336c-70.700 0-128-57.200-128-128 0-70.700 57.200-128 128-128 70.700 0 128 57.200 128 128 0 70.700-57.200 128-128 128z"/></svg></i></div>
  <span class="ic" style="left:928px;top:19.2px"><svg class="fa " viewBox="0 0 576 512" width="18.000" height="16.0" style="" aria-hidden="true"><path fill="currentColor" d="M532 386.200c27.500-27.100 44-61.100 44-98.200 0-80-76.500-146.100-176.200-157.900C368.300 72.500 294.300 32 208 32 93.100 32 0 103.600 0 192c0 37 16.500 71 44 98.200-15.300 30.700-37.300 54.500-37.700 54.900-6.300 6.700-8.100 16.500-4.400 25 3.600 8.500 12 14 21.200 14 53.500 0 96.700-20.200 125.200-38.800 9.200 2.100 18.700 3.700 28.400 4.900C208.100 407.600 281.800 448 368 448c20.800 0 40.800-2.400 59.800-6.800C456.300 459.700 499.400 480 553 480c9.200 0 17.500-5.500 21.200-14 3.600-8.500 1.900-18.300-4.400-25-.4-.3-22.500-24.100-37.800-54.800zm-392.800-92.300L122.100 305c-14.100 9.100-28.500 16.300-43.100 21.400 2.700-4.700 5.400-9.700 8-14.800l15.500-31.100L77.700 256C64.200 242.600 48 220.700 48 192c0-60.700 73.300-112 160-112s160 51.300 160 112-73.300 112-160 112c-16.500 0-33-1.900-49-5.600l-19.800-4.500zM498.300 352l-24.700 24.400 15.500 31.100c2.600 5.100 5.300 10.100 8 14.800-14.600-5.100-29-12.300-43.100-21.400l-17.100-11.100-19.900 4.600c-16 3.700-32.500 5.600-49 5.600-54 0-102.200-20.100-131.300-49.700C338 339.500 416 272.900 416 192c0-3.400-.4-6.700-.7-10C479.700 196.500 528 238.800 528 288c0 28.700-16.200 50.600-29.700 64z"/></svg></span>
  <span class="bdg" style="right:159px;background:#ea4643;color:#ffffff">3</span>
  <span class="ic" style="left:978px;top:19.2px"><svg class="fa " viewBox="0 0 448 512" width="14.000" height="16.0" style="" aria-hidden="true"><path fill="currentColor" d="M439.39 362.29c-19.320-20.760-55.470-51.990-55.470-154.290 0-77.700-54.480-139.900-127.940-155.160V32c0-17.670-14.320-32-31.980-32s-31.980 14.330-31.980 32v20.840C118.560 68.100 64.080 130.300 64.080 208c0 102.300-36.150 133.530-55.470 154.290-6 6.450-8.660 14.160-8.610 21.710.11 16.400 12.980 32 32.100 32h383.800c19.120 0 32-15.600 32.100-32 .05-7.550-2.610-15.270-8.610-21.710zM67.530 368c21.220-27.970 44.420-74.330 44.530-159.420 0-.2-.06-.38-.06-.58 0-61.860 50.140-112 112-112s112 50.140 112 112c0 .2-.06.38-.06.58.11 85.100 23.310 131.460 44.530 159.420H67.530zM224 512c35.320 0 63.970-28.650 63.970-64H160.030c0 35.350 28.650 64 63.970 64z"/></svg></span>
  <span class="bdg" style="right:113px;background:#ffbc00;color:#1e2d3e">15</span>
  <span class="ic" style="left:1024px;top:19.2px"><svg class="fa " viewBox="0 0 512 512" width="16.000" height="16.0" style="" aria-hidden="true"><path fill="currentColor" d="M296 32h192c13.255 0 24 10.745 24 24v160c0 13.255-10.745 24-24 24H296c-13.255 0-24-10.745-24-24V56c0-13.255 10.745-24 24-24zm-80 0H24C10.745 32 0 42.745 0 56v160c0 13.255 10.745 24 24 24h192c13.255 0 24-10.745 24-24V56c0-13.255-10.745-24-24-24zM0 296v160c0 13.255 10.745 24 24 24h192c13.255 0 24-10.745 24-24V296c0-13.255-10.745-24-24-24H24c-13.255 0-24 10.745-24 24zm296 184h192c13.255 0 24-10.745 24-24V296c0-13.255-10.745-24-24-24H296c-13.255 0-24 10.745-24 24v160c0 13.255 10.745 24 24 24z"/></svg></span>
  <span class="ic" style="left:1072px;top:19.2px"><svg class="fa " viewBox="0 0 640 512" width="20.000" height="16.0" style="" aria-hidden="true"><path fill="currentColor" d="M96 224c35.300 0 64-28.700 64-64s-28.700-64-64-64-64 28.700-64 64 28.700 64 64 64zm448 0c35.300 0 64-28.700 64-64s-28.700-64-64-64-64 28.700-64 64 28.700 64 64 64zm32 32h-64c-17.600 0-33.500 7.100-45.100 18.600 40.300 22.100 68.900 62 75.100 109.400h66c17.700 0 32-14.300 32-32v-32c0-35.300-28.700-64-64-64zm-256 0c61.900 0 112-50.100 112-112S381.900 32 320 32 208 82.100 208 144s50.100 112 112 112zm76.800 32h-8.300c-20.800 10-43.900 16-68.500 16s-47.600-6-68.500-16h-8.300C179.600 288 128 339.600 128 403.200V432c0 26.500 21.500 48 48 48h288c26.500 0 48-21.500 48-48v-28.800c0-63.600-51.600-115.200-115.200-115.200zm-223.700-13.400C161.500 263.100 145.600 256 128 256H64c-35.300 0-64 28.700-64 64v32c0 17.700 14.300 32 32 32h65.900c6.300-47.400 34.900-87.300 75.200-109.400z"/></svg></span>
</div>

<!-- ======== main ======== -->
<div id="main">
  <div id="h1">Dashboard</div>
  <div id="bc"><a>Home</a><i>/</i>Dashboard</div>

  <div class="sbx" style="left:15.500px;background:#0b96bb"><h3>2</h3><p>Event Category</p><div class="ft">More info <svg class="fa " viewBox="0 0 512 512" width="16.000" height="16.0" style="" aria-hidden="true"><path fill="currentColor" d="M256 8c137 0 248 111 248 248S393 504 256 504 8 393 8 256 119 8 256 8zm-28.900 143.600l75.500 72.400H120c-13.300 0-24 10.700-24 24v16c0 13.300 10.700 24 24 24h182.600l-75.500 72.400c-9.700 9.300-9.900 24.800-.4 34.300l11 10.900c9.400 9.400 24.600 9.400 33.900 0L404.300 273c9.400-9.400 9.400-24.600 0-33.900L271.600 106.300c-9.400-9.400-24.600-9.400-33.900 0l-11 10.900c-9.500 9.600-9.300 25.100.4 34.400z"/></svg></div></div>
  <div class="sbx" style="left:290.500px;background:#1e9543"><h3>2</h3><p><span class="sel">Events</span></p><div class="ft">More info <svg class="fa " viewBox="0 0 512 512" width="16.000" height="16.0" style="" aria-hidden="true"><path fill="currentColor" d="M256 8c137 0 248 111 248 248S393 504 256 504 8 393 8 256 119 8 256 8zm-28.900 143.600l75.500 72.400H120c-13.300 0-24 10.700-24 24v16c0 13.300 10.700 24 24 24h182.600l-75.500 72.400c-9.700 9.300-9.900 24.800-.4 34.300l11 10.900c9.400 9.400 24.600 9.400 33.900 0L404.300 273c9.400-9.400 9.400-24.600 0-33.900L271.600 106.300c-9.400-9.400-24.600-9.400-33.900 0l-11 10.900c-9.500 9.600-9.300 25.100.4 34.400z"/></svg></div></div>
  <div class="sbx" style="left:565.500px;background:#ffbc00;color:#1e2d3e"><h3>1</h3><p>User Registrations</p><div class="ft" style="color:#1e2d3e">More info <svg class="fa " viewBox="0 0 512 512" width="16.000" height="16.0" style="" aria-hidden="true"><path fill="currentColor" d="M256 8c137 0 248 111 248 248S393 504 256 504 8 393 8 256 119 8 256 8zm-28.900 143.600l75.500 72.400H120c-13.300 0-24 10.700-24 24v16c0 13.300 10.700 24 24 24h182.600l-75.500 72.400c-9.700 9.300-9.900 24.800-.4 34.300l11 10.900c9.400 9.400 24.600 9.400 33.900 0L404.300 273c9.400-9.400 9.400-24.600 0-33.900L271.600 106.300c-9.400-9.400-24.600-9.400-33.900 0l-11 10.900c-9.500 9.600-9.300 25.100.4 34.400z"/></svg></div></div>
  <div class="sbx" style="left:840.500px;background:#ea4643"><h3>1</h3><p>Complete Event</p><div class="ft">More info <svg class="fa " viewBox="0 0 512 512" width="16.000" height="16.0" style="" aria-hidden="true"><path fill="currentColor" d="M256 8c137 0 248 111 248 248S393 504 256 504 8 393 8 256 119 8 256 8zm-28.900 143.600l75.500 72.400H120c-13.300 0-24 10.700-24 24v16c0 13.300 10.700 24 24 24h182.600l-75.500 72.400c-9.700 9.300-9.900 24.800-.4 34.300l11 10.900c9.400 9.400 24.600 9.400 33.900 0L404.300 273c9.400-9.400 9.400-24.600 0-33.900L271.600 106.300c-9.400-9.400-24.600-9.400-33.900 0l-11 10.900c-9.500 9.600-9.300 25.100.4 34.400z"/></svg></div></div>

  <div id="card">
    <div id="ch"><span>Event List</span></div>
    <table>
      <colgroup><col style="width:42px"><col style="width:137.200px"><col style="width:115px"><col style="width:150px"><col style="width:149.500px"><col style="width:133.400px"><col style="width:117.300px"><col style="width:200.600px"></colgroup>
      <thead><tr><th><span>#</span></th><th><span>Name</span></th><th><span>Category</span></th><th><span>Start Date</span></th><th><span>End Date</span></th><th><span>Venue</span></th><th><span>Status</span></th><th><span>Actions</span></th></tr></thead>
      <tbody>
        <tr class="odd"><td><span class="t">1</span></td><td><span class="t" style="letter-spacing:-.28px">BB dance</span></td><td><span class="t">dance</span></td><td><span class="t">Nov. 11, 2022</span></td><td><span class="t">Nov. 12, 2022</span></td><td><span class="t">Coimbatore</span></td><td><span class="st" style="color:#1e9543">Active</span></td><td><a class="btn bi"><svg class="fa " viewBox="0 0 576 512" width="18.000" height="16.0" style="" aria-hidden="true"><path fill="currentColor" d="M572.52 241.4C518.29 135.59 410.93 64 288 64S57.68 135.64 3.48 241.41a32.35 32.35 0 0 0 0 29.19C57.71 376.41 165.07 448 288 448s230.32-71.640 284.520-177.410a32.350 32.350 0 0 0 0-29.190zM288 400a144 144 0 1 1 144-144 143.930 143.930 0 0 1-144 144zm0-240a95.310 95.310 0 0 0-25.310 3.790 47.850 47.850 0 0 1-66.900 66.900A95.780 95.780 0 1 0 288 160z"/></svg></a><a class="btn bi" style="margin-left:4.800px"><svg class="fa " viewBox="0 0 576 512" width="18.000" height="16.0" style="" aria-hidden="true"><path fill="currentColor" d="M402.6 83.2l90.2 90.2c3.8 3.8 3.8 10 0 13.8L274.4 405.6l-92.8 10.3c-12.4 1.4-22.9-9.1-21.5-21.5l10.3-92.8L388.8 83.2c3.8-3.8 10-3.8 13.8 0zm162-22.9l-48.800-48.800c-15.200-15.200-39.900-15.200-55.200 0l-35.400 35.400c-3.800 3.800-3.800 10 0 13.800l90.200 90.200c3.800 3.800 10 3.800 13.800 0l35.400-35.400c15.200-15.300 15.200-40 0-55.200zM384 346.200V448H64V128h229.800c3.200 0 6.200-1.300 8.500-3.500l40-40c7.600-7.600 2.200-20.500-8.500-20.500H48C21.500 64 0 85.500 0 112v352c0 26.500 21.500 48 48 48h352c26.500 0 48-21.500 48-48V306.200c0-10.700-12.900-16-20.500-8.500l-40 40c-2.200 2.300-3.500 5.300-3.500 8.500z"/></svg></a><a class="btn bd" style="margin-left:4px"><svg class="fa " viewBox="0 0 448 512" width="14.000" height="16.0" style="" aria-hidden="true"><path fill="currentColor" d="M432 32H312l-9.400-18.700A24 24 0 0 0 281.100 0H166.800a23.720 23.720 0 0 0-21.400 13.300L136 32H16A16 16 0 0 0 0 48v32a16 16 0 0 0 16 16h416a16 16 0 0 0 16-16V48a16 16 0 0 0-16-16zM53.200 467a48 48 0 0 0 47.900 45h245.800a48 48 0 0 0 47.900-45L416 128H32z"/></svg></a></td></tr>
        <tr><td><span class="t">2</span></td><td><span class="t">Super music</span></td><td><span class="t">music</span></td><td><span class="t">Nov. 3, 2022</span></td><td><span class="t">Nov. 4, 2022</span></td><td><span class="t">Chennai</span></td><td><span class="st" style="color:#0077ff">Completed</span></td><td><a class="btn bi"><svg class="fa " viewBox="0 0 576 512" width="18.000" height="16.0" style="" aria-hidden="true"><path fill="currentColor" d="M572.52 241.4C518.29 135.59 410.93 64 288 64S57.68 135.64 3.48 241.41a32.35 32.35 0 0 0 0 29.19C57.71 376.41 165.07 448 288 448s230.32-71.640 284.520-177.410a32.350 32.350 0 0 0 0-29.190zM288 400a144 144 0 1 1 144-144 143.930 143.930 0 0 1-144 144zm0-240a95.310 95.310 0 0 0-25.310 3.790 47.850 47.850 0 0 1-66.900 66.900A95.780 95.780 0 1 0 288 160z"/></svg></a><a class="btn bi" style="margin-left:4.800px"><svg class="fa " viewBox="0 0 576 512" width="18.000" height="16.0" style="" aria-hidden="true"><path fill="currentColor" d="M402.6 83.2l90.2 90.2c3.8 3.8 3.8 10 0 13.8L274.4 405.6l-92.8 10.3c-12.4 1.4-22.9-9.1-21.5-21.5l10.3-92.8L388.8 83.2c3.8-3.8 10-3.8 13.8 0zm162-22.9l-48.800-48.800c-15.200-15.200-39.900-15.200-55.200 0l-35.400 35.400c-3.800 3.800-3.800 10 0 13.800l90.200 90.200c3.800 3.800 10 3.800 13.800 0l35.400-35.400c15.200-15.300 15.200-40 0-55.200zM384 346.200V448H64V128h229.800c3.200 0 6.200-1.300 8.500-3.500l40-40c7.600-7.600 2.200-20.500-8.500-20.500H48C21.500 64 0 85.500 0 112v352c0 26.500 21.500 48 48 48h352c26.500 0 48-21.500 48-48V306.200c0-10.700-12.900-16-20.500-8.500l-40 40c-2.200 2.300-3.500 5.300-3.500 8.500z"/></svg></a><a class="btn bd" style="margin-left:4px"><svg class="fa " viewBox="0 0 448 512" width="14.000" height="16.0" style="" aria-hidden="true"><path fill="currentColor" d="M432 32H312l-9.400-18.700A24 24 0 0 0 281.100 0H166.800a23.720 23.720 0 0 0-21.400 13.300L136 32H16A16 16 0 0 0 0 48v32a16 16 0 0 0 16 16h416a16 16 0 0 0 16-16V48a16 16 0 0 0-16-16zM53.200 467a48 48 0 0 0 47.900 45h245.800a48 48 0 0 0 47.900-45L416 128H32z"/></svg></a></td></tr>
      </tbody>
    </table>
  </div>

  <div id="foot">
    <div class="l"><b>Copyright &copy;</b> <a><b>Event Management.</b></a> All rights reserved.</div>
    <div class="rr"><b>Developed By</b> <a>Event Management</a></div>
  </div>
</div>

</div>
<!-- cursors -->
<span class="cur" style="left:124.100px;top:141.400px"><svg width="12" height="18.500" viewBox="0 0 11 17"><path d="M.6.8v13l3-2.900 2 4.800 1.900-.8-2-4.700h4.200z" fill="#ffffff" stroke="#222222" stroke-width=".9" stroke-linejoin="round"/></svg></span>
<span class="cur" style="left:673.800px;top:262.700px"><svg width="12.600" height="19.500" viewBox="0 0 11 17"><path d="M.6.8v13l3-2.900 2 4.800 1.900-.8-2-4.700h4.200z" fill="#ffffff" stroke="#222222" stroke-width=".9" stroke-linejoin="round"/></svg></span>

</div>

</body>
</html>
